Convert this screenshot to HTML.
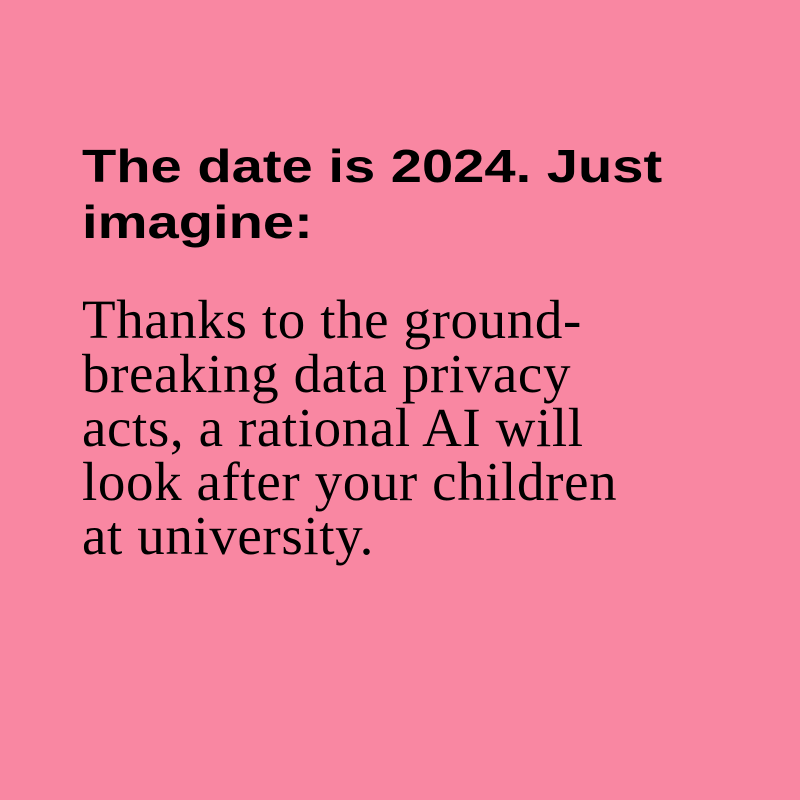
<!DOCTYPE html>
<html><head><style>
body{margin:0;width:800px;height:800px;background:#f987a2;overflow:hidden}
h1{position:absolute;left:82px;top:138px;margin:0;font:bold 46px/56px "Liberation Sans",sans-serif;color:#000;width:640px;transform:scaleX(1.22);transform-origin:0 0;white-space:nowrap}
p{position:absolute;left:82px;top:293px;margin:0;font:55px/54px "Liberation Serif",serif;letter-spacing:0.6px;color:#000;width:640px;white-space:nowrap}
</style></head><body>
<h1>The date is 2024. Just<br>imagine:</h1>
<p>Thanks to the ground-<br>breaking data privacy<br>acts, a rational AI will<br>look after your children<br>at university.</p>
</body></html>
